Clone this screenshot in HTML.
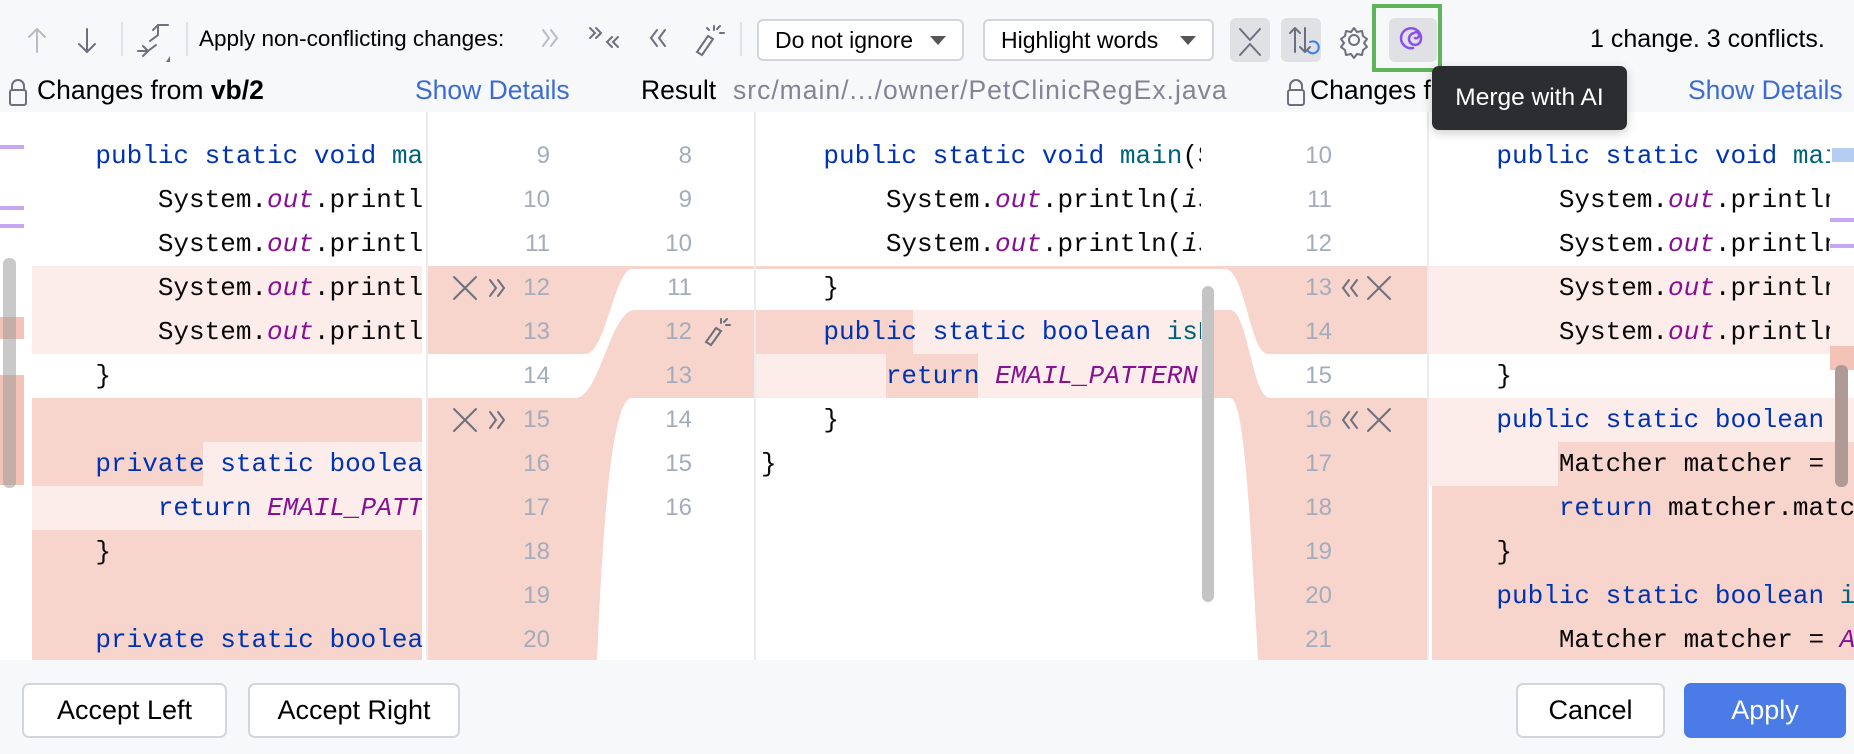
<!DOCTYPE html>
<html><head><meta charset="utf-8"><style>
*{margin:0;padding:0;box-sizing:border-box}
body{width:1854px;height:754px;overflow:hidden;background:#fff;position:relative;font-family:"Liberation Sans",sans-serif;color:#000}
.abs{position:absolute}
.bar{position:absolute;left:0;width:1854px;background:#f7f8fa}
.code{position:absolute;font-family:"Liberation Mono",monospace;font-size:26px;height:44px;line-height:44px;white-space:pre;overflow:hidden;color:#080808}
.k{color:#0033b3}.o{color:#871094;font-style:italic}.m{color:#00627a}
.ln{position:absolute;font-size:24px;color:#a3acbd;height:44px;line-height:44px;text-align:right;width:40px}
.btn{position:absolute;top:683px;height:55px;border:2px solid #d3d5db;border-radius:7px;background:#fff;font-size:27px;line-height:51px;text-align:center}
.dd{position:absolute;top:19px;height:42px;border:2px solid #d3d5db;border-radius:6px;background:#fff;font-size:23px;line-height:38px;padding-left:16px}
.dd:after{content:"";position:absolute;right:16px;top:15px;border-left:8px solid transparent;border-right:8px solid transparent;border-top:9px solid #555}
.hd{position:absolute;top:72px;font-size:26.5px;line-height:36px;white-space:nowrap}
.lnk{color:#3c6bd6}
</style></head><body>
<div class="bar" style="top:0;height:112px"></div>
<div class="bar" style="top:660px;height:94px"></div>

<svg class="abs" style="left:0;top:0" width="1854" height="754">
<g fill="#fdedea">
<rect x="32" y="266" width="390" height="88"/>
<rect x="203" y="442" width="219" height="44"/>
<rect x="32" y="486" width="390" height="44"/>
<rect x="913" y="310" width="293" height="44"/>
<rect x="754" y="354" width="132" height="44"/>
<rect x="978" y="354" width="228" height="44"/>
<rect x="1427" y="266" width="427" height="88"/>
<rect x="1427" y="398" width="427" height="44"/>
<rect x="1427" y="442" width="131" height="44"/>
</g>
<g fill="#f7d5cc">
<rect x="32" y="398" width="390" height="44"/>
<rect x="32" y="442" width="171" height="44"/>
<rect x="32" y="530" width="390" height="130"/>
<rect x="754" y="310" width="159" height="44"/>
<rect x="886" y="354" width="92" height="44"/>
<rect x="754" y="266" width="476" height="3"/>
<rect x="1558" y="442" width="296" height="44"/>
<rect x="1432" y="486" width="422" height="174"/>
<path d="M428,266 L754,266 L754,269 L632,269 C615,269 605,354 586,354 L428,354 Z"/>
<path d="M428,398 L575,398 C600,398 610,310 635,310 L754,310 L754,398 L632,398 C612,398 603,520 597,660 L428,660 Z"/>
<path d="M1225,266 L1427,266 L1427,354 L1268,354 C1250,354 1245,269 1225,269 Z"/>
<path d="M1206,310 L1230,310 C1248,310 1252,398 1270,398 L1427,398 L1427,660 L1258,660 C1250,520 1245,398 1230,398 L1206,398 Z"/>
</g>
<rect x="426" y="112" width="2" height="548" fill="#ebecf0"/>
<rect x="754" y="112" width="2" height="548" fill="#ebecf0"/>
<rect x="1427" y="112" width="2" height="548" fill="#ebecf0"/>
<rect x="0" y="145" width="24" height="4" fill="#c7a6f5"/>
<rect x="0" y="206" width="24" height="4" fill="#c7a6f5"/>
<rect x="0" y="224" width="24" height="4" fill="#c7a6f5"/>
<rect x="0" y="317" width="24" height="22" fill="#f2c3b6"/>
<rect x="0" y="375" width="24" height="110" fill="#f2c3b6"/>
<rect x="3" y="258" width="13" height="230" rx="6" fill="#9c9c9c" opacity=".55"/>
<rect x="1202" y="286" width="12" height="316" rx="6" fill="#c4c4c4"/>
<rect x="1832" y="148" width="22" height="14" fill="#b5cdf0"/>
<rect x="1830" y="218" width="24" height="4" fill="#c7a6f5"/>
<rect x="1830" y="244" width="24" height="4" fill="#c7a6f5"/>
<rect x="1830" y="346" width="24" height="24" fill="#f2c3b6"/>
<rect x="1835" y="365" width="13" height="122" rx="6" fill="#b09a96"/>
</svg>

<svg class="abs" style="left:0;top:0" width="760" height="70" fill="none" stroke-linecap="round">
<path d="M37,29 V52 M29,37 L37,29 L45,37" stroke="#b8bcc4" stroke-width="2"/>
<path d="M87,29 V52 M79,44 L87,52 L95,44" stroke="#6c707e" stroke-width="2"/>
<rect x="121" y="22" width="2" height="34" fill="#dfe1e5"/>
<path d="M150,41 L158,35 L158,25 M153,30 L158,25 L168,25 M138,51 L148,51 L156,45 M143,46 L148,51 L143,56" stroke="#6c707e" stroke-width="2"/>
<path d="M166,62 L170,56 L170,62 Z" fill="#6c707e"/>
<rect x="186" y="22" width="2" height="34" fill="#dfe1e5"/>
<path d="M543,30 L549,38 L543,46 M551,30 L557,38 L551,46" stroke="#b8bcc4" stroke-width="2"/>
<path d="M590,28 L595,33 L590,38 M596,28 L601,33 L596,38 M612,37 L607,42 L612,47 M618,37 L613,42 L618,47" stroke="#6c707e" stroke-width="2"/>
<path d="M657,30 L651,38 L657,46 M665,30 L659,38 L665,46" stroke="#6c707e" stroke-width="2"/>
<path d="M697,52 L708,36 L713,39 L702,55 Z M714,26 V30 M720,33 H724 M717,29 L720,26 M709,30 L707,28" stroke="#6c707e" stroke-width="2"/>
<rect x="740" y="22" width="2" height="34" fill="#dfe1e5"/>
</svg>
<div class="abs" style="left:199px;top:22px;font-size:22.5px;line-height:34px;white-space:nowrap">Apply non-conflicting changes:</div>
<div class="dd" style="left:757px;width:207px">Do not ignore</div>
<div class="dd" style="left:983px;width:231px">Highlight words</div>
<div class="abs" style="left:1230px;top:18px;width:40px;height:44px;background:#dfe1e5;border-radius:6px"></div>
<div class="abs" style="left:1281px;top:18px;width:40px;height:44px;background:#dfe1e5;border-radius:6px"></div>
<div class="abs" style="left:1389px;top:18px;width:48px;height:44px;background:#dfe1e5;border-radius:6px"></div>
<div class="abs" style="left:1372px;top:4px;width:70px;height:68px;border:4px solid #5fb65a"></div>
<svg class="abs" style="left:1220px;top:0" width="240" height="80" fill="none" stroke-linecap="round" stroke-linejoin="round">
<path d="M20,29 L30,40 L40,29 M20,55 L30,44 L40,55" stroke="#6c707e" stroke-width="2"/>
<path d="M75,28 V52 M70,33 L75,28 L80,33 M85,28 V52 M80,47 L85,52 L90,47" stroke="#6c707e" stroke-width="2"/>
<path d="M90,42 a6,6 0 1 1 -2,9" stroke="#3b7de8" stroke-width="2"/>
<circle cx="134" cy="40" r="5" stroke="#6c707e" stroke-width="2"/>
<path d="M134,28 l3,4 l5,-1 l1,5 l4,3 l-3,4 l3,4 l-4,3 l-1,5 l-5,-1 l-3,4 l-3,-4 l-5,1 l-1,-5 l-4,-3 l3,-4 l-3,-4 l4,-3 l1,-5 l5,1 Z" stroke="#6c707e" stroke-width="2"/>
<path d="M193,48 a10,10 0 1 1 8,-9 a6,6 0 1 1 -7,-6 a3,3 0 1 1 1,5" stroke="#8b4ff0" stroke-width="2.5"/>
</svg>
<div class="abs" style="left:1590px;top:21px;font-size:25px;line-height:36px;white-space:nowrap">1 change. 3 conflicts.</div>

<svg class="abs" style="left:0;top:78px" width="1854" height="30" fill="none">
<path d="M12,12 V8 a6,6 0 0 1 12,0 V12" stroke="#6c707e" stroke-width="2"/><rect x="10" y="12" width="16" height="15" rx="2" stroke="#6c707e" stroke-width="2"/>
<path d="M1290,12 V8 a6,6 0 0 1 12,0 V12" stroke="#6c707e" stroke-width="2"/><rect x="1288" y="12" width="16" height="15" rx="2" stroke="#6c707e" stroke-width="2"/>
</svg>
<div class="hd" style="left:37px">Changes from <b>vb/2</b></div>
<div class="hd lnk" style="left:415px">Show Details</div>
<div class="hd" style="left:641px">Result</div>
<div class="hd" style="left:733px;color:#818594;letter-spacing:1px">src/main/.../owner/PetClinicRegEx.java</div>
<div class="hd" style="left:1310px;width:122px;overflow:hidden">Changes from</div>
<div class="hd lnk" style="left:1688px">Show Details</div>

<div class="code" style="left:33px;top:134px;width:389px">    <span class="k">public static void</span> <span class="m">main</span></div>
<div class="code" style="left:33px;top:178px;width:389px">        System.<span class="o">out</span>.println</div>
<div class="code" style="left:33px;top:222px;width:389px">        System.<span class="o">out</span>.println</div>
<div class="code" style="left:33px;top:266px;width:389px">        System.<span class="o">out</span>.println</div>
<div class="code" style="left:33px;top:310px;width:389px">        System.<span class="o">out</span>.println</div>
<div class="code" style="left:33px;top:354px;width:389px">    }</div>
<div class="code" style="left:33px;top:442px;width:389px">    <span class="k">private static boolean</span></div>
<div class="code" style="left:33px;top:486px;width:389px">        <span class="k">return</span> <span class="o">EMAIL_PATTERN</span></div>
<div class="code" style="left:33px;top:530px;width:389px">    }</div>
<div class="code" style="left:33px;top:618px;width:389px;height:42px">    <span class="k">private static boolean</span></div>

<div class="ln" style="left:510px;top:134px">9</div>
<div class="ln" style="left:510px;top:178px">10</div>
<div class="ln" style="left:510px;top:222px">11</div>
<div class="ln" style="left:510px;top:266px">12</div>
<div class="ln" style="left:510px;top:310px">13</div>
<div class="ln" style="left:510px;top:354px">14</div>
<div class="ln" style="left:510px;top:398px">15</div>
<div class="ln" style="left:510px;top:442px">16</div>
<div class="ln" style="left:510px;top:486px">17</div>
<div class="ln" style="left:510px;top:530px">18</div>
<div class="ln" style="left:510px;top:574px">19</div>
<div class="ln" style="left:510px;top:618px;height:42px;overflow:hidden">20</div>
<div class="ln" style="left:652px;top:134px">8</div>
<div class="ln" style="left:652px;top:178px">9</div>
<div class="ln" style="left:652px;top:222px">10</div>
<div class="ln" style="left:652px;top:266px">11</div>
<div class="ln" style="left:652px;top:310px">12</div>
<div class="ln" style="left:652px;top:354px">13</div>
<div class="ln" style="left:652px;top:398px">14</div>
<div class="ln" style="left:652px;top:442px">15</div>
<div class="ln" style="left:652px;top:486px">16</div>
<div class="ln" style="left:1292px;top:134px">10</div>
<div class="ln" style="left:1292px;top:178px">11</div>
<div class="ln" style="left:1292px;top:222px">12</div>
<div class="ln" style="left:1292px;top:266px">13</div>
<div class="ln" style="left:1292px;top:310px">14</div>
<div class="ln" style="left:1292px;top:354px">15</div>
<div class="ln" style="left:1292px;top:398px">16</div>
<div class="ln" style="left:1292px;top:442px">17</div>
<div class="ln" style="left:1292px;top:486px">18</div>
<div class="ln" style="left:1292px;top:530px">19</div>
<div class="ln" style="left:1292px;top:574px">20</div>
<div class="ln" style="left:1292px;top:618px;height:42px;overflow:hidden">21</div>

<svg class="abs" style="left:0;top:0" width="1854" height="660" fill="none" stroke="#6c707e" stroke-width="2" stroke-linecap="round">
<path d="M454,277 L476,299 M476,277 L454,299 M490,280 L496,288 L490,296 M498,280 L504,288 L498,296"/>
<path d="M454,409 L476,431 M476,409 L454,431 M490,412 L496,420 L490,428 M498,412 L504,420 L498,428"/>
<path d="M1349,280 L1343,288 L1349,296 M1357,280 L1351,288 L1357,296 M1368,277 L1390,299 M1390,277 L1368,299"/>
<path d="M1349,412 L1343,420 L1349,428 M1357,412 L1351,420 L1357,428 M1368,409 L1390,431 M1390,409 L1368,431"/>
<path d="M706,342 L716,328 L721,331 L711,345 Z M721,319 V323 M726,325 H730 M724,322 L727,319"/>
</svg>

<div class="code" style="left:761px;top:134px;width:440px">    <span class="k">public static void</span> <span class="m">main</span>(String[] args) {</div>
<div class="code" style="left:761px;top:178px;width:440px">        System.<span class="o">out</span>.println(<span style="font-style:italic">isEmail</span></div>
<div class="code" style="left:761px;top:222px;width:440px">        System.<span class="o">out</span>.println(<span style="font-style:italic">isEmail</span></div>
<div class="code" style="left:761px;top:266px;width:440px">    }</div>
<div class="code" style="left:761px;top:310px;width:440px">    <span class="k">public static boolean</span> <span class="m">isEmail</span></div>
<div class="code" style="left:761px;top:354px;width:440px">        <span class="k">return</span> <span class="o">EMAIL_PATTERN</span>.matcher</div>
<div class="code" style="left:761px;top:398px;width:440px">    }</div>
<div class="code" style="left:761px;top:442px;width:440px">}</div>

<div class="code" style="left:1434px;top:134px;width:396px">    <span class="k">public static void</span> <span class="m">main</span></div>
<div class="code" style="left:1434px;top:178px;width:396px">        System.<span class="o">out</span>.println(</div>
<div class="code" style="left:1434px;top:222px;width:396px">        System.<span class="o">out</span>.println(</div>
<div class="code" style="left:1434px;top:266px;width:396px">        System.<span class="o">out</span>.println(</div>
<div class="code" style="left:1434px;top:310px;width:396px">        System.<span class="o">out</span>.println(</div>
<div class="code" style="left:1434px;top:354px;width:396px">    }</div>
<div class="code" style="left:1434px;top:398px;width:396px">    <span class="k">public static boolean</span> isV</div>
<div class="code" style="left:1434px;top:442px;width:396px">        Matcher matcher = </div>
<div class="code" style="left:1434px;top:486px;width:420px">        <span class="k">return</span> matcher.matches();</div>
<div class="code" style="left:1434px;top:530px;width:420px">    }</div>
<div class="code" style="left:1434px;top:574px;width:420px">    <span class="k">public static boolean</span> <span class="m">isPhone</span></div>
<div class="code" style="left:1434px;top:618px;width:420px;height:42px">        Matcher matcher = <span class="o">A</span></div>

<div class="abs" style="left:1432px;top:66px;width:195px;height:64px;background:#2b2d30;border-radius:7px;color:#fff;font-size:24.5px;line-height:64px;text-align:center;box-shadow:0 3px 10px rgba(0,0,0,.2)">Merge with AI</div>

<div class="btn" style="left:22px;width:205px">Accept Left</div>
<div class="btn" style="left:248px;width:212px">Accept Right</div>
<div class="btn" style="left:1516px;width:149px">Cancel</div>
<div class="btn" style="left:1684px;width:162px;background:#4a7be6;border-color:#4a7be6;color:#fff">Apply</div>
</body></html>
